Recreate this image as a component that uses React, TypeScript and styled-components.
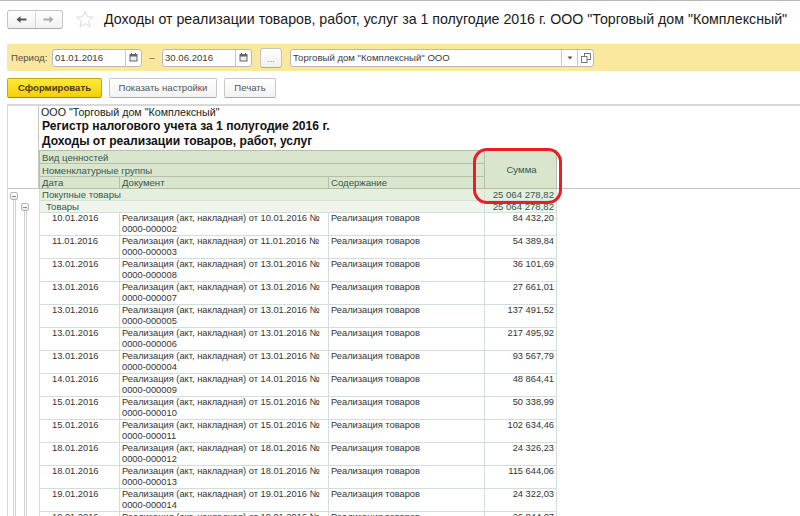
import React from "react";
import styled, { createGlobalStyle } from "styled-components";

const GlobalStyle = createGlobalStyle`
    html, body {
        margin: 0;
        padding: 0;
        background: #fff;
        overflow: hidden;
    }
    body {
        font-family: "Liberation Sans", Arial, sans-serif;
        color: #222;
    }
`;

const Page = styled.div`
    width: 800px;
    height: 516px;
    overflow: hidden;
    border-top: 1px solid #b8b8b8;
    box-sizing: border-box;
    display: flex;
    flex-direction: column;
`;

const TitleRow = styled.div`
    display: flex;
    align-items: center;
    height: 26px;
    margin-top: 5px;
    padding-left: 7px;
`;

const NavGroup = styled.div`
    display: flex;
    flex: none;
    width: 56px;
    height: 19px;
    box-sizing: border-box;
    border: 1px solid #c4c4c4;
    border-bottom-color: #aaa;
    border-radius: 3px;
    background: linear-gradient(#fff, #f1f1f1);
`;

const NavButton = styled.div<{ $last?: boolean }>`
    flex: 1;
    display: flex;
    align-items: center;
    justify-content: center;
    border-left: ${(p) => (p.$last ? "1px solid #d6d6d6" : "none")};
`;

const StarBox = styled.div`
    flex: none;
    width: 18px;
    height: 18px;
    margin-left: 13px;
`;

const Title = styled.h1`
    margin: 0 0 0 10px;
    font-size: 14.2px;
    font-weight: 400;
    color: #1a1a1a;
    white-space: nowrap;
`;

const FilterBar = styled.div`
    display: flex;
    align-items: center;
    height: 27px;
    margin: 12px 0 0 7px;
    background: #fbe89f;
    padding-left: 4px;
`;

const FilterLabel = styled.span`
    width: 41px;
    font-size: 9.6px;
    color: #4f4f4f;
`;

const Field = styled.div<{ $width: number }>`
    display: flex;
    align-items: stretch;
    width: ${(p) => p.$width}px;
    height: 18px;
    box-sizing: border-box;
    background: #fff;
    border: 1px solid #b9b9b9;
    border-radius: 3px;
`;

const FieldText = styled.span`
    flex: 1;
    font-size: 9.6px;
    line-height: 16px;
    padding-left: 2px;
    color: #3c3c3c;
    white-space: nowrap;
    overflow: hidden;
`;

const FieldButton = styled.span`
    width: 15px;
    border-left: 1px solid #c8c8c8;
    display: flex;
    align-items: center;
    justify-content: center;
`;

const Dash = styled.span`
    width: 20px;
    text-align: center;
    font-size: 9.6px;
    color: #555;
`;

const DotsButton = styled.div`
    width: 22px;
    height: 20px;
    margin: 0 8px;
    box-sizing: border-box;
    border: 1px solid #c4c4c4;
    border-bottom-color: #a8a8a8;
    border-radius: 3px;
    background: linear-gradient(#fff, #f0f0f0);
    font-size: 9px;
    color: #888;
    text-align: center;
    line-height: 20px;
`;

const CommandBar = styled.div`
    display: flex;
    gap: 7px;
    margin: 7px 0 0 7px;
`;

const Button = styled.div<{ $primary?: boolean; $width: number }>`
    width: ${(p) => p.$width}px;
    height: 20px;
    box-sizing: border-box;
    border: 1px solid ${(p) => (p.$primary ? "#c9a600" : "#c6c6c6")};
    border-bottom-color: ${(p) => (p.$primary ? "#a88a00" : "#a8a8a8")};
    border-radius: 2px;
    background: ${(p) => (p.$primary ? "linear-gradient(#ffe93d, #f7cf04)" : "linear-gradient(#fff, #f2f2f2)")};
    font-size: 9.6px;
    font-weight: ${(p) => (p.$primary ? 700 : 400)};
    color: ${(p) => (p.$primary ? "#4a3d00" : "#555")};
    text-align: center;
    line-height: 18px;
`;

const Report = styled.div`
    position: relative;
    flex: 1;
    margin: 6px 0 0 7px;
    border-top: 2px solid #d8d8d8;
    border-left: 1px solid #d8d8d8;
    display: flex;
    min-height: 0;
`;

const Gutter = styled.div`
    width: 31px;
    flex: none;
    display: flex;
    flex-direction: column;
`;

const GutterHead = styled.div`
    height: 82px;
    flex: none;
    border-bottom: 1px solid #c4c4c4;
    margin-right: -800px;
    background: linear-gradient(#c8c8c8, #c8c8c8) 30px 0 / 1px 100% no-repeat;
`;

const OutlineRow = styled.div`
    flex: 1;
    display: flex;
    align-items: stretch;
`;

const Outline = styled.div<{ $top: number; $left: number }>`
    display: flex;
    flex-direction: column;
    align-items: center;
    width: 10px;
    margin: ${(p) => p.$top}px 0 0 ${(p) => p.$left}px;
`;

const Collapse = styled.div`
    width: 8px;
    height: 8px;
    flex: none;
    box-sizing: border-box;
    border: 1px solid #b5b5b5;
    border-radius: 2px;
    background: linear-gradient(#fff, #e6e6e6);
    display: flex;
    align-items: center;
    justify-content: center;
    &::after {
        content: "";
        width: 4px;
        height: 1px;
        background: #8c8c8c;
    }
`;

const Stem = styled.div`
    flex: 1;
    width: 3px;
    box-sizing: border-box;
    border-left: 1px solid #cfcfcf;
    border-right: 1px solid #cfcfcf;
`;

const Sheet = styled.div`
    flex: 1;
    min-width: 0;
    position: relative;
    z-index: 1;
`;

const OrgLine = styled.div`
    height: 13px;
    font-size: 10.7px;
    line-height: 13px;
    padding-left: 2px;
    color: #222;
`;

const ReportTitle = styled.div`
    font-size: 12.1px;
    font-weight: 700;
    line-height: 15px;
    padding-left: 3px;
    color: #111;
`;

const Table = styled.table`
    width: 517px;
    margin-top: 1px;
    table-layout: fixed;
    border-collapse: collapse;
    font-size: 9.6px;
`;

const HeadCell = styled.th<{ $center?: boolean; $short?: boolean }>`
    height: ${(p) => (p.$short ? 11 : 12)}px;
    padding: 0 0 0 2px;
    background: #dae5cd;
    border: 1px solid #b4bfa8;
    color: #34584f;
    font-weight: 400;
    line-height: 11px;
    text-align: ${(p) => (p.$center ? "center" : "left")};
    white-space: nowrap;
    overflow: hidden;
`;

const GroupCell = styled.td<{ $level: number; $right?: boolean }>`
    height: 11px;
    padding: ${(p) => (p.$right ? "0 2px 0 0" : p.$level === 1 ? "0 0 0 2px" : "0 0 0 6px")};
    background: ${(p) => (p.$level === 1 ? "#e6efdd" : "#eff5ea")};
    border: 1px solid #d3e0da;
    border-top-color: #c9d8cf;
    color: #34584f;
    line-height: 10px;
    text-align: ${(p) => (p.$right ? "right" : "left")};
    white-space: nowrap;
`;

const Cell = styled.td<{ $indent?: boolean; $right?: boolean }>`
    height: 22px;
    padding: ${(p) => (p.$right ? "0 2px 0 0" : p.$indent ? "0 0 0 12px" : "0 0 0 2px")};
    border: 1px solid #cfe0da;
    font-size: 9.3px;
    color: #333;
    line-height: 11px;
    vertical-align: top;
    text-align: ${(p) => (p.$right ? "right" : "left")};
    white-space: nowrap;
    overflow: hidden;
`;

const Highlight = styled.div`
    position: absolute;
    left: 434px;
    top: 42px;
    width: 89px;
    height: 56px;
    box-sizing: border-box;
    border: 3px solid #ea1c24;
    border-radius: 14px;
    pointer-events: none;
`;

const rows = [
    ["10.01.2016", "000002", "84 432,20"],
    ["11.01.2016", "000003", "54 389,84"],
    ["13.01.2016", "000008", "36 101,69"],
    ["13.01.2016", "000007", "27 661,01"],
    ["13.01.2016", "000005", "137 491,52"],
    ["13.01.2016", "000006", "217 495,92"],
    ["13.01.2016", "000004", "93 567,79"],
    ["14.01.2016", "000009", "48 864,41"],
    ["15.01.2016", "000010", "50 338,99"],
    ["15.01.2016", "000011", "102 634,46"],
    ["18.01.2016", "000012", "24 326,23"],
    ["18.01.2016", "000013", "115 644,06"],
    ["19.01.2016", "000014", "24 322,03"],
    ["19.01.2016", "000015", "26 844,07"],
];

const ArrowIcon = ({ flip, color }: { flip?: boolean; color: string }) => (
    <svg width="11" height="9" viewBox="0 0 11 9" style={flip ? { transform: "scaleX(-1)" } : undefined}>
        <path d="M0.5 4.5 L4.5 1 V3.5 H10.5 V5.5 H4.5 V8 Z" fill={color} />
    </svg>
);

const StarIcon = () => (
    <svg width="18" height="18" viewBox="0 0 18 18" style={{ display: "block" }}>
        <path d="M9 1.2 L11.3 6.8 L17.2 7.2 L12.6 11 L14.1 16.8 L9 13.6 L3.9 16.8 L5.4 11 L0.8 7.2 L6.7 6.8 Z" fill="#fff" stroke="#d9d9d9" />
    </svg>
);

const CalendarIcon = () => (
    <svg width="9" height="9" viewBox="0 0 9 9">
        <path d="M2.5 0 V2 M6.5 0 V2" stroke="#666" />
        <rect x="1" y="1.5" width="7" height="6.5" fill="#eee" stroke="#666" />
        <rect x="1" y="1.5" width="7" height="2" fill="#666" />
    </svg>
);

const CaretIcon = () => (
    <svg width="6" height="4" viewBox="0 0 6 4">
        <path d="M0.5 0.5 H5.5 L3 3.5 Z" fill="#555" />
    </svg>
);

const OpenIcon = () => (
    <svg width="10" height="10" viewBox="0 0 10 10">
        <rect x="3.5" y="0.5" width="6" height="6" fill="none" stroke="#777" />
        <rect x="0.5" y="3.5" width="5.5" height="6" fill="#fff" stroke="#777" />
    </svg>
);

export default function App() {
    return (
        <Page>
            <GlobalStyle />
            <TitleRow>
                <NavGroup>
                    <NavButton><ArrowIcon color="#555" /></NavButton>
                    <NavButton $last><ArrowIcon flip color="#aaa" /></NavButton>
                </NavGroup>
                <StarBox><StarIcon /></StarBox>
                <Title>Доходы от реализации товаров, работ, услуг за 1 полугодие 2016 г. ООО "Торговый дом "Комплексный"</Title>
            </TitleRow>
            <FilterBar>
                <FilterLabel>Период:</FilterLabel>
                <Field $width={90}>
                    <FieldText>01.01.2016</FieldText>
                    <FieldButton><CalendarIcon /></FieldButton>
                </Field>
                <Dash>–</Dash>
                <Field $width={90}>
                    <FieldText>30.06.2016</FieldText>
                    <FieldButton><CalendarIcon /></FieldButton>
                </Field>
                <DotsButton>...</DotsButton>
                <Field $width={304}>
                    <FieldText>Торговый дом "Комплексный" ООО</FieldText>
                    <FieldButton><CaretIcon /></FieldButton>
                    <FieldButton><OpenIcon /></FieldButton>
                </Field>
            </FilterBar>
            <CommandBar>
                <Button $primary $width={95}>Сформировать</Button>
                <Button $width={108}>Показать настройки</Button>
                <Button $width={52}>Печать</Button>
            </CommandBar>
            <Report>
                <Gutter>
                    <GutterHead />
                    <OutlineRow>
                        <Outline $top={3} $left={1}>
                            <Collapse />
                            <Stem />
                        </Outline>
                        <Outline $top={14} $left={1}>
                            <Collapse />
                            <Stem />
                        </Outline>
                    </OutlineRow>
                </Gutter>
                <Sheet>
                    <OrgLine>ООО "Торговый дом "Комплексный"</OrgLine>
                    <ReportTitle>Регистр налогового учета за 1 полугодие 2016 г.</ReportTitle>
                    <ReportTitle>Доходы от реализации товаров, работ, услуг</ReportTitle>
                    <Table>
                        <colgroup>
                            <col style={{ width: 80 }} />
                            <col style={{ width: 209 }} />
                            <col style={{ width: 156 }} />
                            <col style={{ width: 72 }} />
                        </colgroup>
                        <thead>
                            <tr><HeadCell colSpan={3}>Вид ценностей</HeadCell><HeadCell rowSpan={3} $center>Сумма</HeadCell></tr>
                            <tr><HeadCell colSpan={3}>Номенклатурные группы</HeadCell></tr>
                            <tr><HeadCell $short>Дата</HeadCell><HeadCell $short>Документ</HeadCell><HeadCell $short>Содержание</HeadCell></tr>
                        </thead>
                        <tbody>
                            <tr><GroupCell $level={1} colSpan={3}>Покупные товары</GroupCell><GroupCell $level={1} $right>25 064 278,82</GroupCell></tr>
                            <tr><GroupCell $level={2} colSpan={3}>Товары</GroupCell><GroupCell $level={2} $right>25 064 278,82</GroupCell></tr>
                            {rows.map(([date, num, sum]) => (
                                <tr key={num}>
                                    <Cell $indent>{date}</Cell>
                                    <Cell>Реализация (акт, накладная) от {date} №<br />0000-{num}</Cell>
                                    <Cell>Реализация товаров</Cell>
                                    <Cell $right>{sum}</Cell>
                                </tr>
                            ))}
                        </tbody>
                    </Table>
                    <Highlight />
                </Sheet>
            </Report>
        </Page>
    );
}
